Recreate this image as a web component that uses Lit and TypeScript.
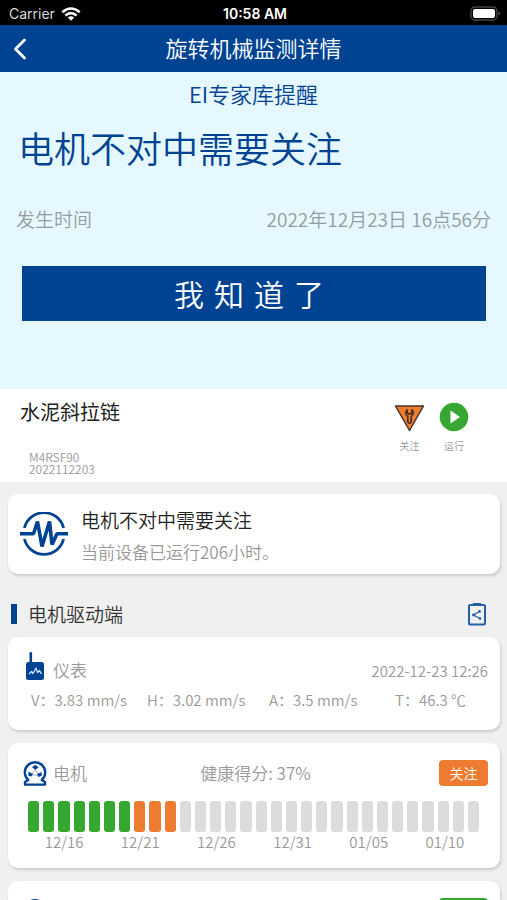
import { LitElement, html, css } from "lit";
import { customElement, property } from "lit/decorators.js";
import { classMap } from "lit/directives/class-map.js";

type Level = "good" | "warn" | "none";

const LEVELS: Level[] = Array.from({ length: 30 }, (_, i) =>
  i < 7 ? "good" : i < 10 ? "warn" : "none"
);
const DATES = ["12/16", "12/21", "12/26", "12/31", "01/05", "01/10"];
const READINGS = [
  { name: "V", value: "3.83 mm/s" },
  { name: "H", value: "3.02 mm/s" },
  { name: "A", value: "3.5 mm/s" },
  { name: "T", value: "46.3 ℃" },
];

const motorIcon = html`<svg class="icon" width="24" height="26" viewBox="0 0 24 26" aria-hidden="true">
  <path d="M5.200 20A10.200 10.200 0 1 1 18.800 20L22 22V24.600H2V22Z" fill="#fff" stroke="#004392" stroke-width="2.400" stroke-linejoin="round"/>
  <g fill="#004392">
    <path d="M12.500 9.800L9 7.200L12.300 4.800L15.600 7.200Z"/>
    <path d="M9.800 14L5.400 11.400L5.400 15.800L8.400 16.600Z"/>
    <path d="M14.200 14L18.600 12L18.800 15.800L15.200 17Z"/>
  </g>
  <path d="M12 9L8.500 15H15.500Z" fill="none" stroke="#004392" stroke-opacity="0.500" stroke-width="0.800"/>
</svg>`;

@customElement("status-bar")
class StatusBar extends LitElement {
  static styles = css`
    :host {
      display: grid;
      grid-template-columns: 1fr auto 1fr;
      align-items: center;
      height: 25px;
      padding: 2px 6px 0 9px;
      box-sizing: border-box;
      background: #000;
      color: #fff;
      font: 500 14px/20px Inter, sans-serif;
    }
    .left { display: flex; align-items: center; gap: 6px; color: #d8d8d8; font-weight: 400; }
    .time { font-weight: 600; }
    .battery { justify-self: end; }
  `;
  render() {
    return html`
      <span class="left">Carrier
        <svg width="20" height="14" viewBox="0 0 20 14" fill="none" stroke="#fff" stroke-width="2.600" aria-hidden="true">
          <path d="M1.300 5.200Q10 -2.200 18.700 5.200"/>
          <path d="M4.400 8.400Q10 3.700 15.600 8.400"/>
          <path d="M10 13.800L6.800 10.500Q10 7.900 13.200 10.500Z" fill="#fff" stroke="none"/>
        </svg>
      </span>
      <span class="time">10:58 AM</span>
      <svg class="battery" width="31" height="15" viewBox="0 0 31 15" aria-hidden="true">
        <rect x="1" y="1" width="26" height="13" rx="4" fill="none" stroke="#444" stroke-width="1.400"/>
        <rect x="3" y="3" width="22" height="9" rx="2" fill="#fff"/>
        <path d="M28.500 5.500Q31.500 7.500 28.500 9.500Z" fill="#555"/>
      </svg>
    `;
  }
}

@customElement("health-card")
class HealthCard extends LitElement {
  @property() name = "";
  @property() score = "";
  @property() tag = "";
  @property() level: Level = "none";
  @property({ attribute: false }) bars: Level[] = [];
  @property({ attribute: false }) dates: string[] = [];

  static styles = css`
    :host { display: block; }
    .head {
      display: grid;
      grid-template-columns: 1fr auto 1fr;
      align-items: center;
      padding: 0 12px 0 15px;
      color: #999;
      font-size: 17px;
      line-height: 26px;
    }
    .name { display: flex; align-items: center; gap: 6px; }
    .icon { flex: none; }
    .tag {
      justify-self: end;
      box-sizing: border-box;
      width: 49px;
      height: 26px;
      border-radius: 4px;
      color: #fff;
      font-size: 14px;
      line-height: 26px;
      text-align: center;
    }
    .bars { display: grid; grid-template-columns: repeat(30, 1fr); gap: 4px; margin: 15px 21px 0 20px; }
    .bar { height: 31px; border-radius: 3px; }
    .good { background: #36a832; }
    .warn { background: #ed7b30; }
    .none { background: #dcdcdc; }
    .dates {
      display: grid;
      grid-template-columns: repeat(6, 1fr);
      margin: 0 17px 0 18px;
      color: #999;
      font-size: 15px;
      line-height: 20px;
      text-align: center;
    }
  `;
  render() {
    return html`
      <div class="head">
        <span class="name">${motorIcon}${this.name}</span>
        <span>${this.score}</span>
        <span class=${classMap({ tag: true, [this.level]: true })}>${this.tag}</span>
      </div>
      <div class="bars">${this.bars.map((b) => html`<span class=${classMap({ bar: true, [b]: true })}></span>`)}</div>
      <div class="dates">${this.dates.map((d) => html`<span>${d}</span>`)}</div>
    `;
  }
}

@customElement("app-root")
class AppRoot extends LitElement {
  static styles = css`
    :host {
      display: flex;
      flex-direction: column;
      height: 100vh;
      overflow: hidden;
      background: #f0f0f0;
      color: #333;
      font-family: "Noto Sans CJK SC", sans-serif;
      font-weight: 350;
    }
    h1, h2, h3, p, dl, dd { margin: 0; font-weight: inherit; }
    button { border: 0; padding: 0; background: none; font: inherit; cursor: pointer; }
    svg { display: block; }
    .nav {
      flex: none;
      display: grid;
      grid-template-columns: 40px 1fr 40px;
      align-items: center;
      height: 47px;
      background: #004392;
      color: #fff;
    }
    .back { display: grid; place-items: center; height: 47px; }
    .nav-title { padding-bottom: 4px; font-size: 22px; line-height: 32px; text-align: center; }
    .content { flex: 1; min-height: 0; overflow-y: auto; scrollbar-width: none; }
    .alert { background: #e5f7ff; padding: 5px 16px 68px; color: #004392; }
    .alert-source { font-size: 22px; line-height: 32px; text-align: center; }
    .alert-title { margin-top: 11px; padding-left: 2px; font-size: 36px; line-height: 54px; }
    .alert-time {
      display: flex;
      justify-content: space-between;
      margin-top: 31px;
      color: #949da1;
      font-size: 19px;
      line-height: 28px;
    }
    .ack {
      display: block;
      width: calc(100% - 11px);
      height: 55px;
      margin: 33px 5px 0 6px;
      background: #004392;
      color: #fff;
      font-size: 30px;
      line-height: 55px;
      letter-spacing: 10px;
    }
    .device {
      display: flex;
      justify-content: space-between;
      background: #fff;
      padding: 8px 38px 7px 20px;
    }
    .device-name { font-size: 20px; line-height: 30px; font-weight: 400; color: #222; }
    .device-id { margin: 24px 0 0 9px; font-size: 12px; line-height: 12px; color: #999; }
    .states { display: flex; gap: 14px; padding-top: 5px; }
    .state { display: flex; flex-direction: column; align-items: center; gap: 6px; font-size: 10px; line-height: 16px; color: #999; }
    .card {
      margin: 0 7px 13px 8px;
      border-radius: 10px;
      background: #fff;
      box-shadow: 1px 2px 3px rgba(0, 0, 0, 0.16);
    }
    .summary { display: flex; align-items: center; gap: 13px; height: 80px; margin-top: 12px; margin-bottom: 0; padding-left: 12px; }
    .summary-body { padding-top: 4px; }
    .summary-title { font-size: 19px; line-height: 28px; color: #222; }
    .summary-text { margin-top: 4px; font-size: 17px; line-height: 28px; color: #999; }
    .section { display: flex; align-items: center; box-sizing: border-box; height: 63px; padding: 16px 20px 0 11px; }
    .section-title {
      flex: 1;
      display: flex;
      align-items: center;
      gap: 11px;
      font-size: 19px;
      line-height: 28px;
    }
    .section-title::before { content: ""; width: 6px; height: 20px; background: #004392; }
    .meter { padding: 14px 12px 19px 18px; color: #999; }
    .meter-head { display: flex; justify-content: space-between; align-items: center; }
    .meter-name { display: flex; align-items: center; gap: 8px; font-size: 17px; line-height: 30px; padding-top: 4px; }
    .meter-name svg { margin-top: -8px; }
    .meter-time { font-size: 15px; line-height: 22px; padding-top: 6px; }
    .readings { display: grid; grid-template-columns: 116px 122px 126px 1fr; padding-left: 5px; margin-top: 4px; font-size: 15px; line-height: 22px; white-space: nowrap; }
    .reading { display: flex; }
    .health { padding: 17px 0 16px; }
  `;

  render() {
    return html`
      <status-bar></status-bar>
      <header class="nav">
        <button class="back" aria-label="返回">
          <svg width="14" height="22" viewBox="0 0 14 22" fill="none" stroke="#fff" stroke-width="2.800" stroke-linecap="round" stroke-linejoin="round"><path d="M11.500 2L2.500 11L11.500 20"/></svg>
        </button>
        <h1 class="nav-title">旋转机械监测详情</h1>
      </header>
      <main class="content">
        <section class="alert">
          <p class="alert-source">EI专家库提醒</p>
          <h2 class="alert-title">电机不对中需要关注</h2>
          <div class="alert-time"><span>发生时间</span><time>2022年12月23日 16点56分</time></div>
          <button class="ack">我知道了</button>
        </section>

        <section class="device">
          <div>
            <h2 class="device-name">水泥斜拉链</h2>
            <p class="device-id">M4RSF90<br>2022112203</p>
          </div>
          <div class="states">
            <div class="state">
              <svg width="31" height="30" viewBox="0 0 31 30" aria-hidden="true">
                <path d="M1.500 4H29.500L15.500 28.500Z" fill="#ef7b2f" stroke="#43332b" stroke-width="1.500" stroke-linejoin="round"/>
                <path d="M13.200 7.800A4 4 0 0 0 13.800 14.400V20Q15.500 22.500 17.200 20V14.400A4 4 0 0 0 17.800 7.800V11L15.500 12.300L13.200 11Z" fill="#ef7b2f" stroke="#43332b" stroke-width="1.600" stroke-linejoin="round"/>
              </svg>
              关注
            </div>
            <div class="state">
              <svg width="30" height="30" viewBox="0 0 30 30" aria-hidden="true">
                <circle cx="15" cy="15" r="14.300" fill="#36a832"/>
                <path d="M11.500 8.500V21.500L21 15Z" fill="#fff"/>
              </svg>
              运行
            </div>
          </div>
        </section>

        <section class="card summary">
          <svg width="48" height="44" viewBox="0 0 48 44" fill="none" stroke="#004392" aria-hidden="true">
            <g stroke-width="2.800">
              <path d="M4.400 16A20.200 20.200 0 0 1 43.600 16"/>
              <path d="M4.400 27A20.200 20.200 0 0 0 43.600 27"/>
            </g>
            <path d="M0 21.700H13.500L17.500 9.500L22 34.500L29.500 9.500L32 32.500L37 21.700H48" stroke-width="3.600" stroke-linejoin="bevel"/>
          </svg>
          <div class="summary-body">
            <h3 class="summary-title">电机不对中需要关注</h3>
            <p class="summary-text">当前设备已运行206小时。</p>
          </div>
        </section>

        <div class="section">
          <h2 class="section-title">电机驱动端</h2>
          <button aria-label="分享报告">
            <svg width="20" height="24" viewBox="0 0 20 24" fill="none" stroke="#2660a4" aria-hidden="true">
              <rect x="2" y="3" width="16" height="19.500" rx="1" stroke-width="2"/>
              <path d="M6 2.500H14" stroke-width="3"/>
              <path d="M12.500 9.500L6.500 13L13 16.500" stroke-width="1.400"/>
              <g fill="#2660a4" stroke="none"><circle cx="12.500" cy="9.400" r="1.300"/><circle cx="6.500" cy="13" r="1.400"/><circle cx="13" cy="16.600" r="1.300"/></g>
            </svg>
          </button>
        </div>

        <section class="card meter">
          <div class="meter-head">
            <h3 class="meter-name">
              <svg width="19" height="28" viewBox="0 0 19 28" aria-hidden="true">
                <rect x="3.500" y="0" width="2.600" height="12" rx="1.200" fill="#004392"/>
                <rect x="0" y="10" width="18" height="18" rx="2.500" fill="#004392"/>
                <path d="M3 22L5.500 19.500L7 21.500L10 16L11.500 20.500L13.500 18.500L15.500 22" fill="none" stroke="#c8e4ff" stroke-width="1.300" stroke-linejoin="round"/>
              </svg>
              仪表
            </h3>
            <time class="meter-time">2022-12-23 12:26</time>
          </div>
          <dl class="readings">
            ${READINGS.map((r) => html`<div class="reading"><dt>${r.name}：</dt><dd>${r.value}</dd></div>`)}
          </dl>
        </section>

        <health-card class="card health" name="电机" score="健康得分: 37%" tag="关注" level="warn" .bars=${LEVELS} .dates=${DATES}></health-card>
        <health-card class="card health" level="good" .bars=${LEVELS}></health-card>
      </main>
    `;
  }
}
